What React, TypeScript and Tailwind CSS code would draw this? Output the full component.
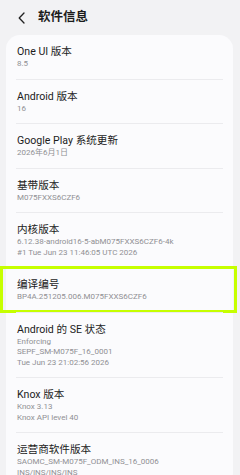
import React from "react";

type Row = { title: string; values: string[]; highlight?: boolean };

const rows: Row[] = [
  { title: "One UI 版本", values: ["8.5"] },
  { title: "Android 版本", values: ["16"] },
  { title: "Google Play 系统更新", values: ["2026年6月1日"] },
  { title: "基带版本", values: ["M075FXXS6CZF6"] },
  {
    title: "内核版本",
    values: ["6.12.38-android16-5-abM075FXXS6CZF6-4k", "#1 Tue Jun 23 11:46:05 UTC 2026"],
  },
  { title: "编译编号", values: ["BP4A.251205.006.M075FXXS6CZF6"], highlight: true },
  {
    title: "Android 的 SE 状态",
    values: ["Enforcing", "SEPF_SM-M075F_16_0001", "Tue Jun 23 21:02:56 2026"],
  },
  { title: "Knox 版本", values: ["Knox 3.13", "Knox API level 40"] },
  {
    title: "运营商软件版本",
    values: ["SAOMC_SM-M075F_ODM_INS_16_0006", "INS/INS/INS/INS"],
  },
];

export default function App() {
  return (
    <div
      className="w-[240px] h-[475px] overflow-hidden bg-[#f2f2f4]"
      style={{ fontFamily: "Roboto, 'Noto Sans CJK SC', sans-serif" }}
    >
      <div className="h-[35px] flex items-center pl-[17px]">
        <svg width="10" height="14" viewBox="0 0 10 14" className="mr-[11px]">
          <path d="M7 2 L2.2 7 L7 12" fill="none" stroke="#222" strokeWidth="1.3" strokeLinecap="round" strokeLinejoin="round" />
        </svg>
        <span className="text-[12.5px] font-bold text-[#1c1c1c] leading-none">软件信息</span>
      </div>
      <div className="mx-[6px] w-[227px] rounded-[14px] bg-[#fbfbfd]">
        {rows.map((r, i) => (
          <div key={i} className="relative">
            {i > 0 && <div className="mx-[10px] h-px bg-[#ebebee]" />}
            <div className="px-[11px] pt-[9px] pb-[9px]">
              <div className="text-[10.6px] leading-[15px] text-[#1c1c1c]">{r.title}</div>
              {r.values.map((v, j) => (
                <div key={j} className="text-[8px] leading-[10.5px] text-[#909094] whitespace-nowrap">
                  {v}
                </div>
              ))}
            </div>
            {r.highlight && (
              <div className="absolute left-[-6px] top-[-1px] w-[237px] h-[47px] border-[3px] border-[#c6ff00]" />
            )}
          </div>
        ))}
      </div>
    </div>
  );
}
